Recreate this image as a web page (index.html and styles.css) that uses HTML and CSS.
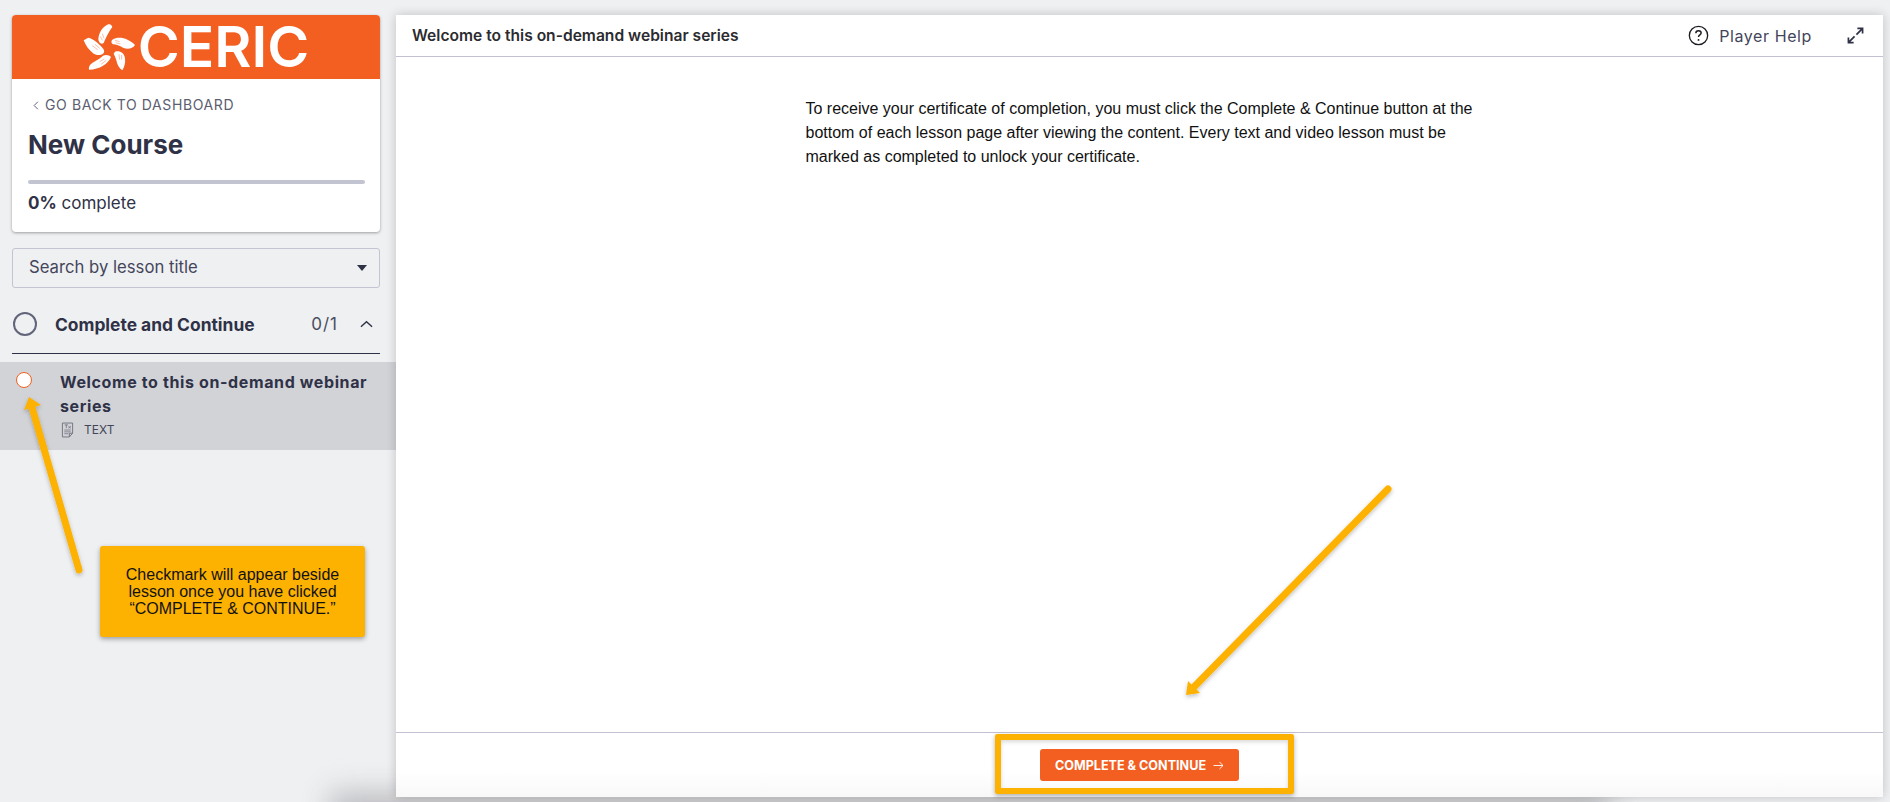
FILE: index.html
```html
<!DOCTYPE html>
<html lang="en">
<head>
    <meta charset="UTF-8">
    <title>Welcome to this on-demand webinar series</title>
    <link rel="stylesheet" href="styles.css">
</head>
<body>
    <aside class="sidebar">
        <div class="course-card">
            <div class="brand">
                <svg class="brand-mark" viewBox="12 12 156 144" width="52" height="48" aria-hidden="true">
                    <g fill="#fff">
                        <path d="M88 16 C72 22 60 40 58 60 C58 70 66 78 74 72 C80 58 88 40 100 24 C98 18 94 14 88 16 Z"/>
                        <path d="M100 62 C120 50 148 58 168 78 C160 90 146 92 132 86 C122 80 112 76 102 76 C96 72 96 66 100 62 Z"/>
                        <path d="M108 98 C122 94 136 102 138 118 C140 132 136 144 130 154 C120 148 114 136 112 124 C110 116 106 108 104 104 Z"/>
                        <path d="M96 114 C88 134 62 152 30 152 C28 142 34 134 46 128 C56 122 64 118 72 110 C80 106 92 108 96 114 Z"/>
                        <path d="M14 64 L28 56 C44 60 58 72 68 84 C74 90 78 96 74 102 C68 110 54 110 44 104 C30 94 20 80 14 64 Z"/>
                    </g>
                    <g fill="none" stroke="#f35e21" stroke-width="1.2">
                        <path d="M64 52 L70 64 M70 44 L75 58"/>
                        <path d="M108 64 L122 68 M110 71 L124 75"/>
                        <path d="M120 106 L122 122 M128 108 L128 122"/>
                        <path d="M62 128 L76 120 M66 136 L82 124"/>
                        <path d="M40 80 L56 92 M48 76 L62 88"/>
                    </g>
                </svg>
                <span class="brand-name">CERIC</span>
            </div>
            <div class="course-info">
                <a class="back-link" href="#">
                    <svg viewBox="0 0 8 12" width="6" height="9" aria-hidden="true"><path d="M6.5 1 L1.5 6 L6.5 11" fill="none" stroke="#5b5e70" stroke-width="1.3"/></svg>
                    GO BACK TO DASHBOARD
                </a>
                <h1 class="course-title">New Course</h1>
                <div class="progress-bar"></div>
                <p class="progress-text"><strong>0%</strong> complete</p>
            </div>
        </div>

        <div class="search-select">
            <span>Search by lesson title</span>
            <span class="caret"></span>
        </div>

        <div class="section-row">
            <span class="section-circle"></span>
            <span class="section-title">Complete and Continue</span>
            <span class="section-count">0/1</span>
            <svg viewBox="0 0 14 8" width="13" height="8" aria-hidden="true"><path d="M1 7 L7 1.5 L13 7" fill="none" stroke="#2f3247" stroke-width="1.5"/></svg>
        </div>

        <div class="lesson-row">
            <span class="lesson-radio"></span>
            <div class="lesson-body">
                <div class="lesson-title">Welcome to this on-demand webinar series</div>
                <div class="lesson-type">
                    <svg viewBox="0 0 14 17" width="13" height="16" aria-hidden="true">
                        <path d="M1.5 1 H12.5 V12 L9 16 H1.5 Z M9 16 V12 H12.5" fill="none" stroke="#6d6f7d" stroke-width="1"/>
                        <path d="M3.5 8.5 H10.5 M3.5 10.5 H10.5 M3.5 12.5 H8" stroke="#6d6f7d" stroke-width="0.8"/>
                        <path d="M4 3 H7.5 M5.7 3 V6.5 M8 4.5 L10.5 6.5 M10.5 4.5 L8 6.5" stroke="#6d6f7d" stroke-width="0.9" fill="none"/>
                    </svg>
                    TEXT
                </div>
            </div>
        </div>
    </aside>

    <main class="player">
        <header class="player-header">
            <span class="player-title">Welcome to this on-demand webinar series</span>
            <span class="help">
                <svg viewBox="0 0 22 22" width="21" height="21" aria-hidden="true">
                    <circle cx="11" cy="11" r="9.6" fill="none" stroke="#1d1d24" stroke-width="1.4"/>
                    <path d="M8.2 8.6 C8.2 6.8 9.5 6 11 6 C12.6 6 13.8 7 13.8 8.4 C13.8 10.4 11 10.4 11 12.6" fill="none" stroke="#1d1d24" stroke-width="1.5"/>
                    <circle cx="11" cy="15.6" r="1" fill="#1d1d24"/>
                </svg>
                Player Help
            </span>
            <svg class="expand" viewBox="0 0 18 18" width="17" height="17" aria-hidden="true">
                <path d="M10 8 L16 2 M11 1.5 H16.5 V7 M8 10 L2 16 M1.5 11 V16.5 H7" fill="none" stroke="#2f3247" stroke-width="1.8"/>
            </svg>
        </header>
        <div class="lesson-content">
            <p>To receive your certificate of completion, you must click the Complete &amp; Continue button at the bottom of each lesson page after viewing the content. Every text and video lesson must be marked as completed to unlock your certificate.</p>
        </div>
        <footer class="player-footer">
            <button class="complete-btn">COMPLETE &amp; CONTINUE
                <svg viewBox="0 0 12 10" width="11" height="9" aria-hidden="true"><path d="M0.5 5 H11 M7 1 L11 5 L7 9" fill="none" stroke="#fff" stroke-width="1"/></svg>
            </button>
        </footer>
    </main>
    <div class="bottom-glow"></div>

    <!-- annotations pasted on top of the screenshot -->
    <svg class="arrows" viewBox="0 0 1890 802" width="1890" height="802" aria-hidden="true">
        <defs>
            <filter id="soft" x="-20%" y="-20%" width="140%" height="140%">
                <feDropShadow dx="0" dy="2" stdDeviation="2" flood-color="#000" flood-opacity="0.25"/>
            </filter>
        </defs>
        <g filter="url(#soft)">
            <path d="M79 570 L31 404" stroke="#fdb100" stroke-width="7" stroke-linecap="round" fill="none"/>
            <path d="M29 397 L41 405 L24 410 Z" fill="#fdb100"/>
            <path d="M1388 489 L1192 689" stroke="#fdb100" stroke-width="7" stroke-linecap="round" fill="none"/>
            <path d="M1186 695 L1188 681 L1200 693 Z" fill="#fdb100"/>
        </g>
    </svg>
    <div class="callout">Checkmark will appear beside lesson once you have clicked “COMPLETE &amp; CONTINUE.”</div>
    <div class="highlight"></div>
</body>
</html>
```

FILE: styles.css
```css
* {
    box-sizing: border-box;
}

body {
    margin: 0;
    height: 802px;
    overflow: hidden;
    position: relative;
    display: flex;
    background-color: #eff0f2;
    color: #2f3247;
    font-family: Inter, "Open Sans", sans-serif;
}

.sidebar {
    width: 396px;
    flex-shrink: 0;
    padding-top: 15px;
    position: relative;
    z-index: 1;
}

.course-card {
    margin: 0 16px 0 12px;
    height: 217px;
    background-color: #fff;
    border-radius: 4px;
    box-shadow: 0 1px 3px rgba(0, 0, 0, 0.35);
}

.brand {
    height: 64px;
    background-color: #f35e21;
    border-radius: 4px 4px 0 0;
    display: flex;
    align-items: center;
    justify-content: center;
    gap: 3px;
}

.brand-mark {
    display: block;
}

.brand-name {
    color: #fff;
    font-size: 57px;
    line-height: 60px;
    font-weight: 600;
}

.course-info {
    padding: 16px 15px 0 16px;
}

.back-link {
    display: flex;
    align-items: center;
    gap: 6px;
    margin-left: 5px;
    color: #5b5e70;
    font-size: 14px;
    line-height: 20px;
    letter-spacing: 0.6px;
    text-decoration: none;
}

.course-title {
    margin: 12px 0 0;
    font-size: 26px;
    line-height: 36px;
    font-weight: 700;
}

.progress-bar {
    margin-top: 17px;
    height: 4px;
    border-radius: 2px;
    background-color: #c3c4d1;
}

.progress-text {
    margin: 8px 0 0;
    font-size: 17px;
    line-height: 22px;
}

.search-select {
    margin: 16px 16px 0 12px;
    height: 40px;
    padding: 0 12px 3px 16px;
    display: flex;
    align-items: center;
    justify-content: space-between;
    border: 1px solid #c3c4d1;
    border-radius: 3px;
    font-size: 16.7px;
    color: #43465a;
}

.caret {
    width: 0;
    height: 0;
    margin-top: 3px;
    border-left: 5px solid transparent;
    border-right: 5px solid transparent;
    border-top: 6px solid #2f3247;
}

.section-row {
    margin: 17px 16px 0 12px;
    height: 49px;
    padding: 0 7px 10px 1px;
    display: flex;
    align-items: center;
    border-bottom: 1px solid #2f3247;
}

.section-circle {
    width: 24px;
    height: 24px;
    border: 2px solid #62657a;
    border-radius: 50%;
    flex-shrink: 0;
}

.section-title {
    margin-left: 18px;
    flex: 1;
    font-size: 17.4px;
    font-weight: 700;
}

.section-count {
    margin-right: 22px;
    font-size: 17px;
    color: #4a4d60;
    letter-spacing: 1px;
}

.lesson-row {
    margin-top: 8px;
    height: 88px;
    padding: 8px 12px 0 16px;
    display: flex;
    background-color: #d2d3d7;
}

.lesson-radio {
    width: 16px;
    height: 16px;
    margin-top: 2px;
    background-color: #fff;
    border: 1px solid #f35e21;
    border-radius: 50%;
    flex-shrink: 0;
}

.lesson-body {
    margin-left: 28px;
}

.lesson-title {
    font-size: 16px;
    line-height: 24px;
    font-weight: 700;
    letter-spacing: 0.62px;
}

.lesson-type {
    margin-top: 3px;
    margin-left: 1px;
    display: flex;
    align-items: center;
    gap: 10px;
    font-size: 12px;
    line-height: 17px;
    color: #43465a;
}

.player {
    width: 1487px;
    height: 782px;
    margin-top: 15px;
    background-color: #fff;
    display: flex;
    flex-direction: column;
    position: relative;
    z-index: 2;
    box-shadow: 0 0 10px rgba(0, 0, 0, 0.2);
}

.player-header {
    height: 42px;
    padding: 0 19px 0 16px;
    display: flex;
    align-items: center;
    border-bottom: 1px solid #c3c1d1;
    flex-shrink: 0;
}

.player-title {
    flex: 1;
    font-size: 15.6px;
    font-weight: 600;
    color: #2b2b30;
}

.help {
    display: flex;
    align-items: center;
    gap: 10px;
    margin-right: 35px;
    font-size: 16px;
    letter-spacing: 0.6px;
    color: #43465a;
}

.lesson-content {
    flex: 1;
    width: 668px;
    margin: 0 auto;
    padding-top: 40px;
    font-family: "Liberation Sans", Arial, sans-serif;
    font-size: 16px;
    line-height: 24px;
    color: #111;
}

.lesson-content p {
    margin: 0;
    width: 672px;
}

.player-footer {
    height: 65px;
    padding-top: 16px;
    display: flex;
    justify-content: center;
    border-top: 1px solid #c3c1d1;
    background: linear-gradient(#fff 60%, #f8f8f8);
    flex-shrink: 0;
}

.complete-btn {
    width: 199px;
    height: 32px;
    display: flex;
    align-items: center;
    justify-content: center;
    gap: 7px;
    border: 0;
    border-radius: 3px;
    background-color: #f35e21;
    color: #fff;
    font-family: Inter, sans-serif;
    font-size: 12.6px;
    font-weight: 700;
}

.bottom-glow {
    position: absolute;
    left: 330px;
    top: 792px;
    width: 1280px;
    height: 40px;
    background-color: #bcbdc0;
    filter: blur(14px);
    z-index: 1;
}

.arrows {
    position: absolute;
    top: 0;
    left: 0;
    z-index: 3;
    pointer-events: none;
}

.callout {
    position: absolute;
    left: 100px;
    top: 546px;
    width: 265px;
    height: 91px;
    padding: 0 15px;
    display: flex;
    align-items: center;
    text-align: center;
    z-index: 3;
    background-color: #fdb100;
    border-radius: 3px;
    box-shadow: 0 2px 5px rgba(0, 0, 0, 0.35);
    font-family: "Liberation Sans", Arial, sans-serif;
    font-size: 16px;
    line-height: 17px;
    color: #111;
}

.highlight {
    position: absolute;
    left: 995px;
    top: 734px;
    width: 299px;
    height: 60px;
    z-index: 3;
    border: 6px solid #fdb100;
    border-radius: 2px;
    box-shadow: 0 2px 5px rgba(0, 0, 0, 0.3), inset 0 2px 4px rgba(0, 0, 0, 0.15);
}
```
